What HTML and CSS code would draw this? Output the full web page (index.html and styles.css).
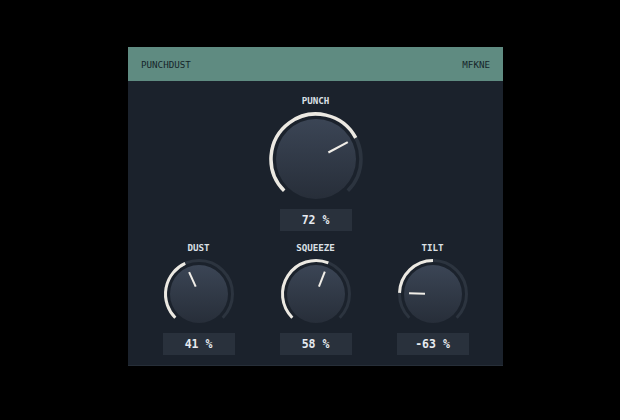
FILE: index.html
```html
<!DOCTYPE html>
<html>
<head>
<meta charset="utf-8">
<link rel="stylesheet" href="styles.css">
</head>
<body>
<div class="panel">
  <div class="header"><span>PUNCHDUST</span><span>MFKNE</span></div>
  <div class="content">
    <div class="knob big">
      <div class="label">PUNCH</div>
      <svg width="100" height="100" viewBox="0 0 100 100">
        <defs>
          <linearGradient id="gb" x1="0" y1="0" x2="0" y2="1">
            <stop offset="0" stop-color="#3b4555"/>
            <stop offset="1" stop-color="#272e39"/>
          </linearGradient>
        </defs>
        <path class="track" d="M18.18 81.82 A45 45 0 1 1 81.82 81.82" stroke-width="3.5"/>
        <path class="fill" d="M18.18 81.82 A45 45 0 1 1 89.73 28.87" stroke-width="3.5"/>
        <circle cx="50" cy="50" r="40" fill="url(#gb)"/>
        <line class="ptr" x1="62.36" y1="43.43" x2="81.78" y2="33.10" stroke-width="2.2"/>
      </svg>
      <div class="value">72 %</div>
    </div>
    <div class="row">
      <div class="knob">
        <div class="label">DUST</div>
        <svg width="76" height="76" viewBox="0 0 76 76">
          <defs>
            <linearGradient id="gs" x1="0" y1="0" x2="0" y2="1">
              <stop offset="0" stop-color="#3b4555"/>
              <stop offset="1" stop-color="#272e39"/>
            </linearGradient>
          </defs>
          <path class="track" d="M14.31 61.69 A33.5 33.5 0 1 1 61.69 61.69" stroke-width="3"/>
          <path class="fill" d="M14.31 61.69 A33.5 33.5 0 0 1 24.21 7.47" stroke-width="3"/>
          <circle cx="38" cy="38" r="29" fill="url(#gs)"/>
          <line class="ptr" x1="34.71" y1="30.71" x2="28.12" y2="16.13" stroke-width="2"/>
        </svg>
        <div class="value">41 %</div>
      </div>
      <div class="knob">
        <div class="label">SQUEEZE</div>
        <svg width="76" height="76" viewBox="0 0 76 76">
          <path class="track" d="M14.31 61.69 A33.5 33.5 0 1 1 61.69 61.69" stroke-width="3"/>
          <path class="fill" d="M14.31 61.69 A33.5 33.5 0 0 1 50.33 6.85" stroke-width="3"/>
          <circle cx="38" cy="38" r="29" fill="url(#gs)"/>
          <line class="ptr" x1="40.94" y1="30.56" x2="46.83" y2="15.68" stroke-width="2"/>
        </svg>
        <div class="value">58 %</div>
      </div>
      <div class="knob">
        <div class="label">TILT</div>
        <svg width="76" height="76" viewBox="0 0 76 76">
          <path class="track" d="M14.31 61.69 A33.5 33.5 0 1 1 61.69 61.69" stroke-width="3"/>
          <path class="fill" d="M4.52 36.83 A33.5 33.5 0 0 1 38 4.5" stroke-width="3"/>
          <circle cx="38" cy="38" r="29" fill="url(#gs)"/>
          <line class="ptr" x1="30" y1="37.72" x2="14.01" y2="37.16" stroke-width="2"/>
        </svg>
        <div class="value">-63 %</div>
      </div>
    </div>
  </div>
</div>
</body>
</html>
```
FILE: styles.css
```css
html, body {
  margin: 0;
  padding: 0;
  background: #000;
}
body {
  width: 620px;
  height: 420px;
  overflow: hidden;
  font-family: "DejaVu Sans Mono", "Liberation Mono", monospace;
}
.panel {
  margin: 47px 0 0 128px;
  width: 375px;
  background: #1b222c;
  border-bottom: 1px solid #262e38;
}
.header {
  height: 34px;
  background: #5f8b81;
  display: flex;
  align-items: center;
  justify-content: space-between;
  padding: 0 13px;
  font-size: 9.2px;
  color: #15252a;
}
.content {
  display: flex;
  flex-direction: column;
  align-items: center;
  padding: 14px 0 10px;
}
.knob {
  display: flex;
  flex-direction: column;
  align-items: center;
}
.label {
  height: 12px;
  line-height: 12px;
  font-size: 9.2px;
  font-weight: bold;
  color: #dbe0e6;
  margin-bottom: 2px;
}
svg {
  display: block;
}
.track {
  fill: none;
  stroke: #2c343f;
}
.fill {
  fill: none;
  stroke: #ece9e2;
}
.ptr {
  stroke: #f1eee8;
}
.value {
  width: 72px;
  height: 22px;
  line-height: 22px;
  text-align: center;
  background: #29313c;
  color: #e6eaef;
  font-size: 11.5px;
  font-weight: bold;
}
.row {
  margin-top: 11px;
  display: grid;
  grid-template-columns: repeat(3, 117px);
  justify-items: center;
}
.row .value {
  margin-top: 1px;
}
```
